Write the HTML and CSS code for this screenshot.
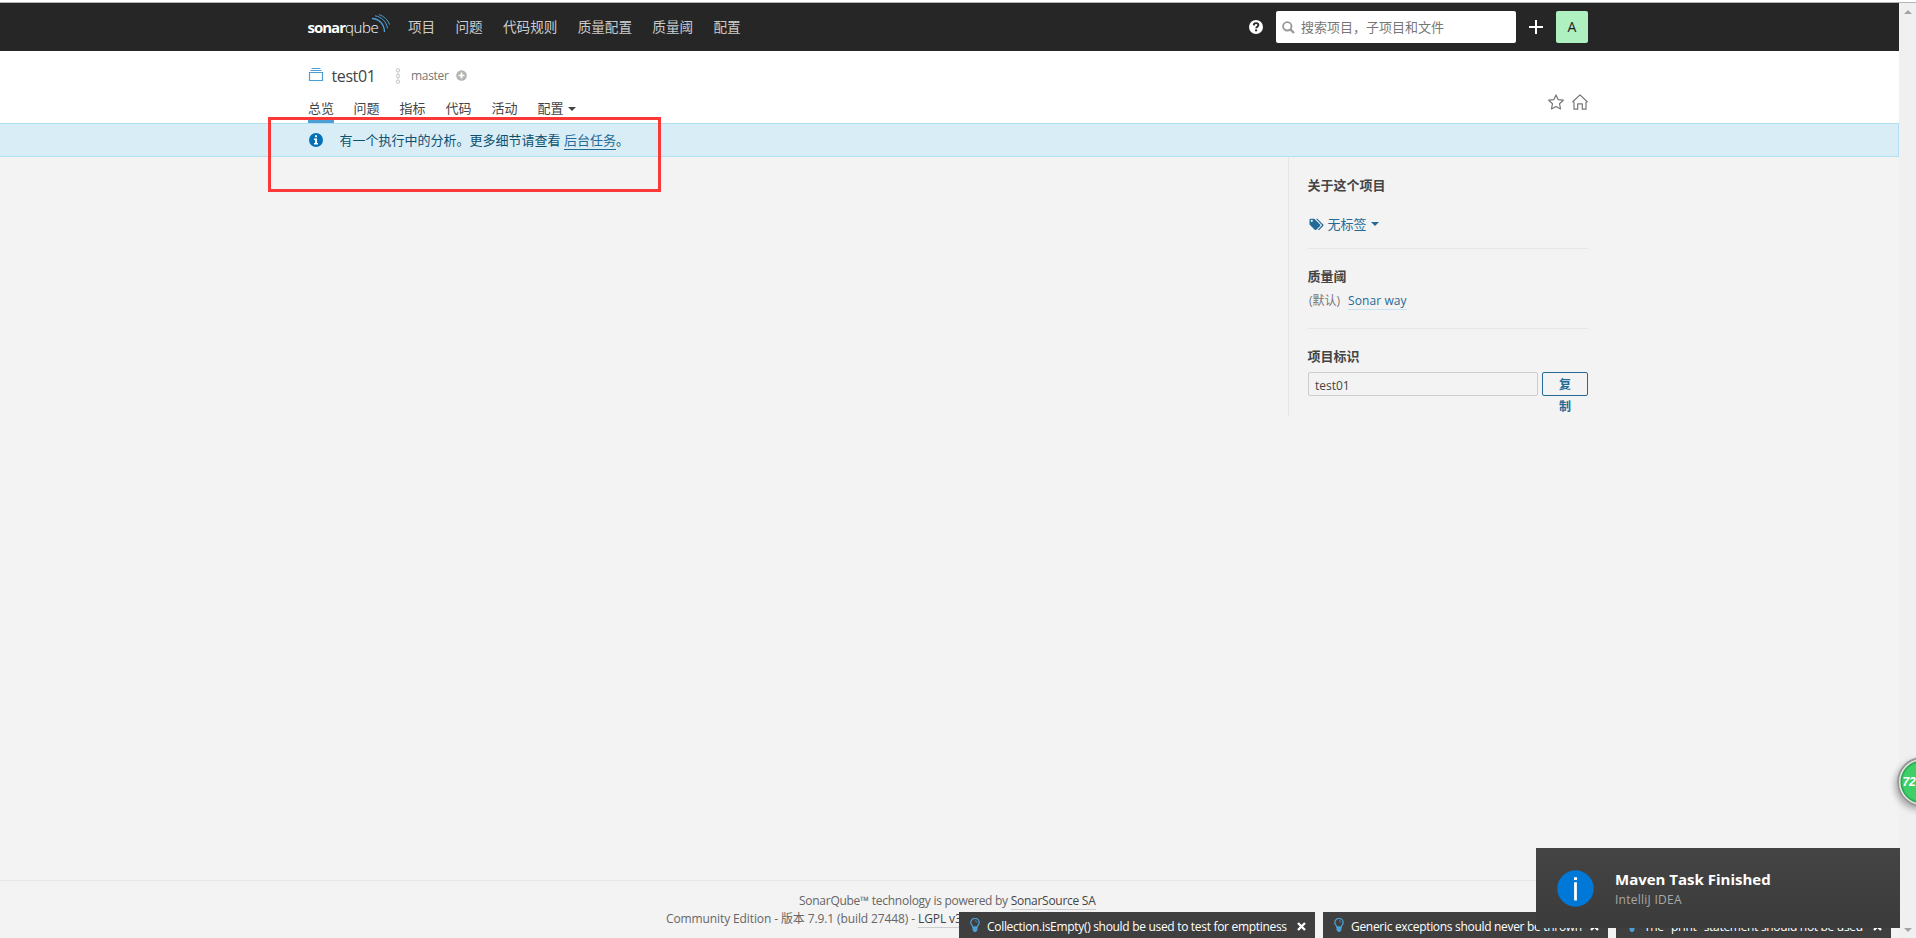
FILE: index.html
```html
<!DOCTYPE html>
<html lang="zh-CN">
<head>
<meta charset="utf-8">
<title>test01</title>
<link rel="stylesheet" href="styles.css">
</head>
<body>
<div class="window">
<div class="page">
  <header class="global">
    <div class="container global-row">
      <div class="logo"><b>sonar</b><span>qube</span>
        <svg class="waves" width="20" height="20" viewBox="0 0 20 20" fill="none" stroke="#4b9fd5" stroke-width="1"><path d="M1 4.500c6.500 0 12.500 5.500 12.500 13.500" stroke-width="1.300"/><path d="M4 1.800c6.500 1 11.500 6 12.500 12.500"/><path d="M8 .6c5 1.600 9 5.400 10.500 10"/></svg>
      </div>
      <nav class="menu"><a>项目</a><a>问题</a><a>代码规则</a><a>质量配置</a><a>质量阈</a><a>配置</a></nav>
      <svg class="help" width="14" height="14" viewBox="0 0 14 14"><circle cx="7" cy="7" r="7" fill="#fff"/><path d="M4.700 5.400C4.800 3.900 5.700 3.100 7 3.100c1.400 0 2.400.8 2.400 2 0 1.600-2.200 1.700-2.200 3.200" fill="none" stroke="#262626" stroke-width="1.900"/><path d="M6.100 9.400h2v1.900h-2z" fill="#262626"/></svg>
      <div class="search"><svg width="13" height="13" viewBox="0 0 13 13" fill="none" stroke="#999" stroke-width="1.900"><circle cx="5.300" cy="5.300" r="4.200"/><path d="M8.400 8.400l3.600 3.600" stroke-width="2.300"/></svg><span>搜索项目，子项目和文件</span></div>
      <svg class="plus" width="14" height="14" viewBox="0 0 14 14"><path d="M6 0h2v6h6v2H8v6H6V8H0V6h6z" fill="#fff"/></svg>
      <div class="avatar">A</div>
    </div>
  </header>
  <section class="context">
    <div class="container context-row">
      <div class="context-main">
        <div class="title">
          <svg class="project" width="16" height="16" viewBox="0 0 16 16" fill="none" stroke="#4b9fd5"><path d="M1.500 5.500h13v8h-13z" stroke-width="1.200"/><path d="M2.500 3.500h11M3.500 1.500h9"/></svg>
          <span class="name">test01</span>
          <svg class="branch" width="6" height="16" viewBox="0 0 6 16" fill="none" stroke="#cdcdcd" stroke-width="1.100"><circle cx="3" cy="2.200" r="1.600"/><circle cx="3" cy="8" r="1.600"/><circle cx="3" cy="13.800" r="1.600"/><path d="M3 3.800v2.600M3 9.600v2.600"/></svg>
          <span class="master">master</span>
          <svg class="add" width="11" height="11" viewBox="0 0 11 11"><circle cx="5.500" cy="5.500" r="5.300" fill="#b4b4b4"/><path d="M5.500 2.500v6M2.500 5.500h6" stroke="#fff" stroke-width="1.700"/></svg>
        </div>
        <nav class="tabs"><a class="active">总览</a><a>问题</a><a>指标</a><a>代码</a><a>活动</a><a>配置<i class="caret"></i></a></nav>
      </div>
      <div class="actions">
        <svg width="16" height="16" viewBox="0 0 16 16" fill="none" stroke="#777" stroke-width="1.200" stroke-linejoin="round"><path d="M8 .9l2.100 4.700 5.200.6-3.800 3.500 1 5.200L8 12.400l-4.500 2.500 1-5.200L.7 6.200l5.200-.6z"/></svg>
        <svg width="16" height="16" viewBox="0 0 16 16" fill="none" stroke="#777" stroke-width="1.200" stroke-linejoin="round"><path d="M.8 7.800L8 .9l7.200 6.900-1.200.8v6.600h-3.700V9.800H5.700v5.400H2V8.600z"/></svg>
      </div>
    </div>
  </section>
  <div class="alert">
    <div class="container alert-row">
      <svg width="14" height="14" viewBox="0 0 14 14"><circle cx="7" cy="7" r="7" fill="#0271b9"/><path d="M6 2.300h2v1.900H6zM5 5.500h3v4.600h1v1.500H5v-1.500h1V7H5z" fill="#fff"/></svg>
      <span>有一个执行中的分析。更多细节请查看 <a>后台任务</a>。</span>
    </div>
  </div>
  <main class="container overview">
    <aside class="sidebar">
      <section class="block tags-block">
        <h4>关于这个项目</h4>
        <div class="tags">
          <svg width="15" height="13" viewBox="0 0 15 13" fill="#236a97"><path fill-rule="evenodd" d="M.5 1.500l.8-.8h4l6 6v1l-4.300 4.400h-1L.5 6.500zm2.300.2a1.100 1.100 0 100 2.200 1.100 1.100 0 000-2.200z"/><path d="M7 .7h1.400l6 6v1l-4.500 4.500-.9-.7 4.100-4.300z"/></svg>
          <span>无标签</span><i class="caret"></i>
        </div>
      </section>
      <section class="block gate-block">
        <h4>质量阈</h4>
        <div class="gate"><span>(默认)</span><a>Sonar way</a></div>
      </section>
      <section class="key-block">
        <h4>项目标识</h4>
        <div class="key"><div class="field">test01</div><div class="copy">复<br>制</div></div>
      </section>
    </aside>
  </main>
  <footer class="footer">
    <div class="powered">SonarQube™ technology is powered by <a>SonarSource SA</a></div>
    <div class="edition">Community Edition - 版本 7.9.1 (build 27448) - <a>LGPL v3</a></div>
  </footer>
</div>
<div class="scrollbar"><i class="up"></i><i class="down"></i></div>

<div class="highlight"></div>
<div class="hints">
  <div class="hint h1"><svg class="bulb" width="10" height="15" viewBox="0 0 10 15"><path d="M3 9.300C2.800 7.600.8 7 .8 4.600a4.200 4.200 0 018.400 0c0 2.400-2 3-2.200 4.700z" fill="none" stroke="#4b9fd5" stroke-width="1.300"/><path d="M2.500 8.600h5V12L6 14H4l-1.500-2z" fill="#4b9fd5"/><path d="M5 2.800c1.200 0 2 .8 2 1.800" fill="none" stroke="#4b9fd5" stroke-width=".8"/></svg><span>Collection.isEmpty() should be used to test for emptiness</span><svg class="x" width="9" height="9" viewBox="0 0 9 9"><path d="M1 1l7 7M8 1L1 8" stroke="#fff" stroke-width="2.300"/></svg></div>
  <div class="hint h2"><svg class="bulb" width="10" height="15" viewBox="0 0 10 15"><path d="M3 9.300C2.800 7.600.8 7 .8 4.600a4.200 4.200 0 018.400 0c0 2.400-2 3-2.200 4.700z" fill="none" stroke="#4b9fd5" stroke-width="1.300"/><path d="M2.500 8.600h5V12L6 14H4l-1.500-2z" fill="#4b9fd5"/><path d="M5 2.800c1.200 0 2 .8 2 1.800" fill="none" stroke="#4b9fd5" stroke-width=".8"/></svg><span>Generic exceptions should never be thrown</span><svg class="x" width="9" height="9" viewBox="0 0 9 9"><path d="M1 1l7 7M8 1L1 8" stroke="#fff" stroke-width="2.300"/></svg></div>
  <div class="hint h3"><svg class="bulb" width="10" height="15" viewBox="0 0 10 15"><path d="M2.500 8.600h5V12L6 14H4l-1.500-2z" fill="#4b9fd5"/></svg><span>The "print" statement should not be used</span><svg class="x" width="9" height="9" viewBox="0 0 9 9"><path d="M1 1l7 7M8 1L1 8" stroke="#fff" stroke-width="2.300"/></svg></div>
</div>
<div class="toast">
  <svg width="37" height="37" viewBox="0 0 37 37"><circle cx="18.500" cy="18.500" r="18.200" fill="#0078d7"/><path d="M17.100 12.200h2.800v18.200h-2.800zM17 7.200h3v2.700h-3z" fill="#fff"/></svg>
  <div><div class="toast-title">Maven Task Finished</div><div class="toast-sub">IntelliJ IDEA</div></div>
</div>
<div class="ball"><span>72</span></div>
</div>
</body>
</html>
```
FILE: styles.css
```css
* { box-sizing: border-box; }
body { margin: 0; font: 13px/20px "Open Sans", "Noto Sans CJK SC", sans-serif; color: #444; }
svg { display: block; flex: none; }
h4 { margin: 0 0 0 -.5px; font-size: 13px; line-height: 20px; font-weight: 600; }
.window { position: relative; width: 1916px; height: 938px; overflow: hidden; background: #f3f3f3; border-top: 2px solid #fff; display: flex; }
.window::before { content: ""; position: absolute; left: 0; right: 0; top: 0; height: 1px; background: #b4b4b4; }
.page { width: 1899px; padding-top: 1px; display: flex; flex-direction: column; }
.container { width: 1280px; margin-left: 308px; }
.global { height: 48px; background: #262626; }
.global-row { height: 48px; display: flex; align-items: center; }
.logo { position: relative; width: 100.500px; font-size: 15px; line-height: 20px; color: #fff; white-space: nowrap; letter-spacing: -1px; margin-left: -.5px; }
.logo b { font-weight: 700; }
.logo span { font-weight: 300; letter-spacing: -.4px; }
.waves { position: absolute; left: 63.500px; top: -3px; }
.menu { display: flex; gap: 20.3px; font-size: 13.6px; color: #ccc; flex: 1; }
.help { margin-right: 13px; }
.search { width: 240px; height: 32px; background: #fff; border-radius: 2px; display: flex; align-items: center; gap: 6px; padding-left: 6px; color: #777; font-size: 13px; }
.plus { margin: 0 13px; }
.avatar { width: 32px; height: 32px; border-radius: 2px; background: #aef0c0; color: #222; text-align: center; line-height: 32px; font-size: 14px; }
.context { height: 72px; background: #fff; }
.context-row { display: flex; justify-content: space-between; }
.title { height: 48px; padding-top: 2px; display: flex; align-items: center; }
.project { margin-top: -2px; }
.name { font-size: 16px; margin: 0 23.500px 0 7.500px; width: 40px; letter-spacing: -.4px; white-space: nowrap; }
.branch { margin-right: 10px; }
.master { font-size: 12px; color: #777; width: 44.500px; letter-spacing: -.3px; }
.add { margin-top: -2px; }
.tabs { display: flex; gap: 20px; height: 24px; line-height: 19px; }
.tabs a { height: 24px; margin-left: -.5px; margin-right: .5px; }
.tabs .active { border-bottom: 3px solid #4b9fd5; margin: 0; }
.caret { display: inline-block; border: 4px solid transparent; border-top-color: currentColor; border-bottom: 0; vertical-align: 2px; margin-left: 4px; }
.actions { display: flex; gap: 8px; padding-top: 43px; }
.alert { height: 34px; border: 1px solid #b1dff3; border-left: 0; background: #d9edf7; color: #0e516f; }
.alert-row { display: flex; align-items: center; height: 32px; gap: 16.500px; padding-left: 1px; }
.alert a { color: #236a97; border-bottom: 1px solid #236a97; }
.overview { display: flex; justify-content: flex-end; flex: 1; align-items: flex-start; }
.sidebar { width: 300px; height: 259px; padding: 0 0 0 19px; border-left: 1px solid #e6e6e6; }
.block { border-bottom: 1px solid #e6e6e6; }
.tags-block { height: 92px; padding-top: 18px; }
.tags { display: flex; align-items: center; margin-top: 19px; color: #236a97; gap: 3.500px; padding-left: 1px; }
.tags .caret { margin-left: .5px; }
.gate-block { height: 80px; padding-top: 17px; }
.gate { display: flex; gap: 7px; font-size: 12px; line-height: 16px; color: #777; margin-top: 7px; padding-left: 1px; }
.gate a { color: #236a97; border-bottom: 1px solid #cae3f2; letter-spacing: .1px; }
.gate span { width: 32px; white-space: nowrap; }
.key-block { padding-top: 17px; }
.key { display: flex; gap: 4px; margin-top: 6px; }
.field { width: 230px; height: 24px; border: 1px solid #cdcdcd; border-radius: 2px; padding: 0 6px; line-height: 25px; font-size: 12px; }
.copy { width: 46px; height: 24px; border: 1px solid #236a97; border-radius: 2px; color: #236a97; font-size: 12px; line-height: 22px; font-weight: 600; text-align: center; padding-top: 1px; }
.footer { height: 58px; border-top: 1px solid #e6e6e6; padding-top: 11px; font-size: 12px; line-height: 18px; color: #666; }
.footer a { color: #444; border-bottom: 1px solid #cdcdcd; }
.powered { padding-left: 799px; letter-spacing: -.27px; white-space: nowrap; }
.edition { padding-left: 666px; letter-spacing: -.11px; white-space: nowrap; }
.scrollbar { width: 17px; background: #f0f0f0; display: flex; flex-direction: column; justify-content: space-between; align-items: center; padding: 8px 0 6px; }
.scrollbar i { border: 4px solid transparent; }
.up { border-top: 0 !important; border-bottom-color: #a3a3a3 !important; }
.down { border-bottom: 0 !important; border-top-color: #a3a3a3 !important; }
.highlight { position: absolute; left: 268px; top: 115px; width: 393px; height: 75px; border: 3px solid #fb3838; }
.hints { position: absolute; left: 959px; top: 910px; display: flex; gap: 8px; }
.hint { height: 26px; background: #3f3f3f; color: #fff; display: flex; align-items: center; padding: 4px 9px 0 11px; font-size: 12px; white-space: nowrap; letter-spacing: -.31px; }
.hint .bulb { margin: -4px 2px 0 0; }
.hint .x { margin-top: -2px; }
.hint span { flex: 1; }
.h1 { width: 356px; }
.h2 { width: 285px; }
.h3 { width: 275px; }
.h1 span, .h2 span, .h3 span { padding-left: 5px; }
.toast { position: absolute; left: 1536px; top: 846px; width: 364px; height: 80px; background: linear-gradient(#444, #3b3b3b); display: flex; align-items: center; padding-left: 21px; gap: 21px; color: #fff; }
.toast-title { font-size: 15px; font-weight: 700; line-height: 20px; white-space: nowrap; padding-top: 2px; }
.toast-sub { font-size: 12px; line-height: 20px; padding-top: 1px; letter-spacing: .25px; color: #a8a8a8; }
.ball { position: absolute; left: 1897px; top: 755px; width: 50px; height: 50px; border-radius: 50%; border: 2px solid #999; background: radial-gradient(circle at 50% 50%, #3fcf68 0 19px, #24a44a 21px, #e9e9e9 22px); box-shadow: -2px 3px 6px rgba(0,0,0,.3); }
.ball span { position: absolute; left: 3.500px; top: 13px; color: #fff; font: italic 700 12px/20px "Liberation Sans", sans-serif; letter-spacing: -.2px; }
```
